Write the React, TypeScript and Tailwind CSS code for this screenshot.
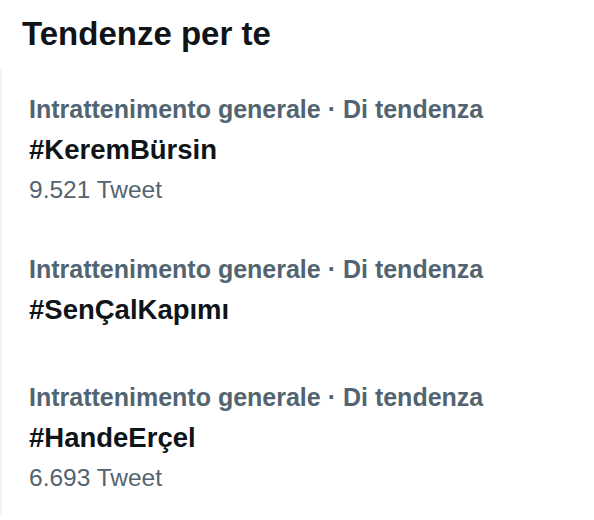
const trends = [
  { tag: "#KeremBürsin", count: "9.521 Tweet" },
  { tag: "#SenÇalKapımı", count: null },
  { tag: "#HandeErçel", count: "6.693 Tweet" },
];

export default function App() {
  return (
    <div className="w-[594px] h-[520px] bg-white overflow-hidden font-['Liberation_Sans',sans-serif]">
      <h2 className="px-[22px] pt-[14px] h-[68px] text-[33px] font-bold text-[#0f1419] leading-[40px]">
        Tendenze per te
      </h2>
      <div className="border-l-2 border-[#f2f4f5]">
        {trends.map((t) => (
          <div key={t.tag} className={`px-[27px] pt-[21px] ${t.count ? "pb-[19px]" : "pb-[25px]"}`}>
            <div className="text-[25px] font-bold text-[#536471] leading-[40px]">
              Intrattenimento generale · Di tendenza
            </div>
            <div className="text-[27.5px] font-bold text-[#0f1419] leading-[42px]">{t.tag}</div>
            {t.count && <div className="text-[24.5px] text-[#536471] leading-[38px]">{t.count}</div>}
          </div>
        ))}
      </div>
    </div>
  );
}
